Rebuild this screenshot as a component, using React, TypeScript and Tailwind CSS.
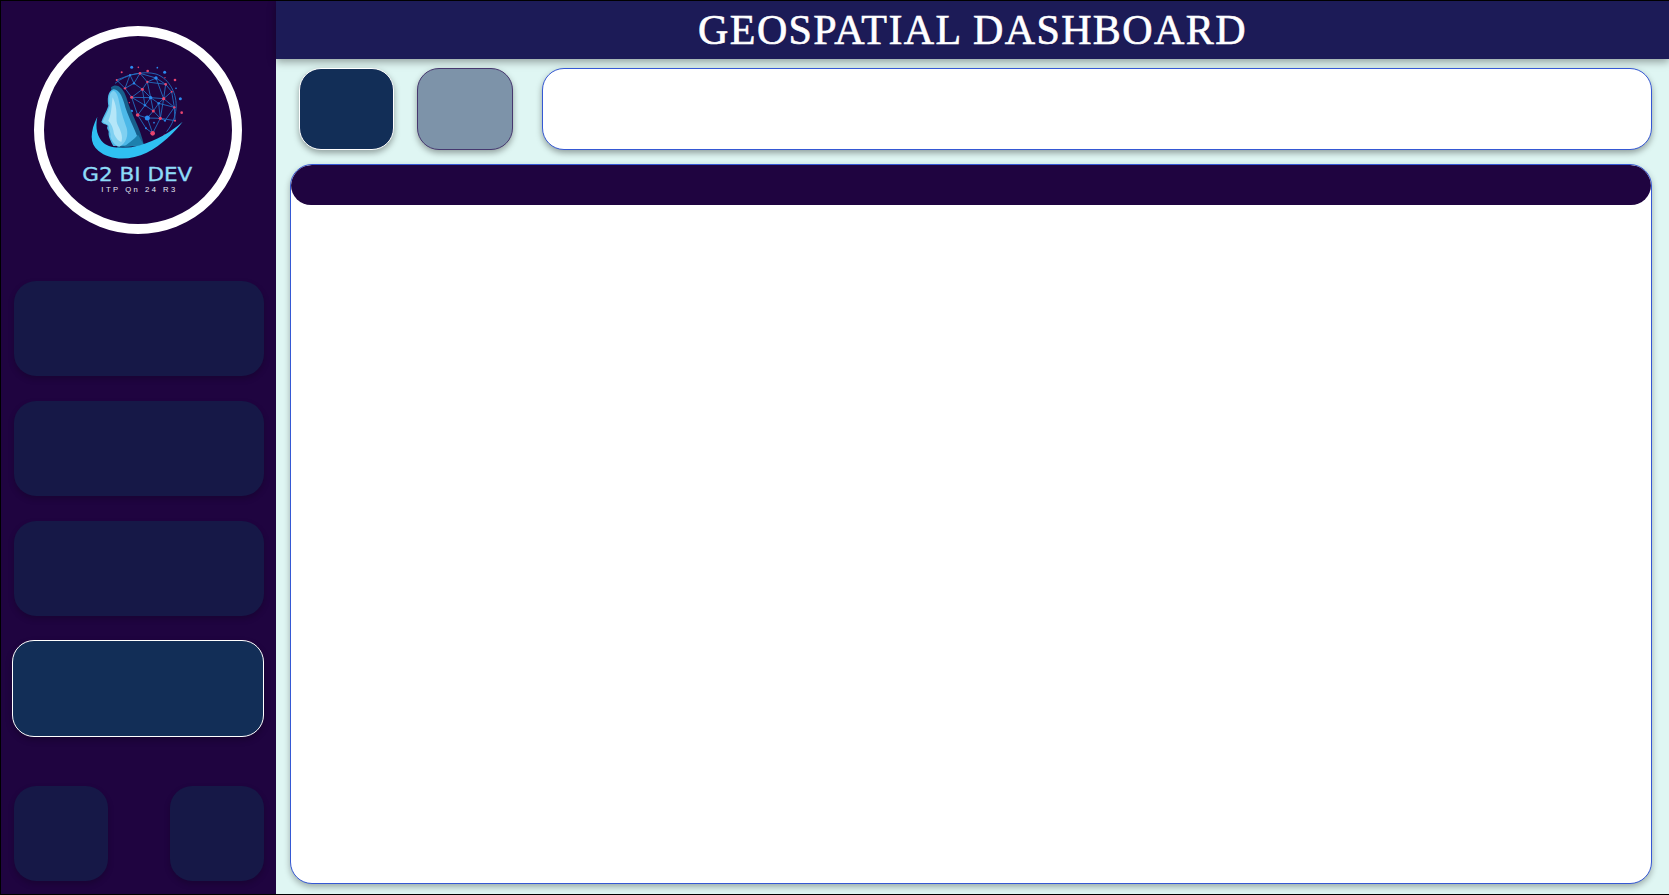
const nodes: [number, number, string, number][] = [
  [420, 220, "#e8456e", 4], [497, 253, "#e8456e", 4], [427, 268, "#e8456e", 4.5], [395, 292, "#e8456e", 4.5],
  [491, 296, "#e8456e", 5], [460, 333, "#e8456e", 4.5], [413, 345, "#e8456e", 5.5], [481, 355, "#e8456e", 5],
  [458, 400, "#e8456e", 7], [523, 322, "#e8456e", 3.5], [375, 265, "#e8456e", 3.5], [442, 246, "#e8456e", 3.5],
  [468, 234, "#2a8af0", 5], [452, 293, "#2a8af0", 5], [442, 354, "#2a8af0", 7.5], [402, 250, "#2a8af0", 3.5],
  [435, 316, "#2a8af0", 3.5], [476, 310, "#2a8af0", 3.5], [515, 275, "#e8456e", 3], [525, 362, "#e8456e", 3],
  [350, 240, "#e8456e", 3], [390, 225, "#2a8af0", 3], [495, 362, "#2a8af0", 3], [438, 385, "#2a8af0", 3],
];
const edges: [number, number][] = [
  [20, 21], [21, 0], [0, 12], [12, 1], [1, 18], [18, 9], [9, 19], [19, 7], [7, 8], [8, 23], [23, 6],
  [20, 10], [10, 15], [15, 0], [15, 2], [2, 11], [11, 0], [11, 12], [11, 1], [10, 3], [3, 2], [2, 13],
  [13, 11], [13, 4], [4, 1], [4, 18], [4, 9], [4, 17], [17, 13], [17, 5], [17, 7], [5, 13], [5, 16],
  [16, 13], [16, 3], [16, 6], [3, 6], [6, 14], [14, 5], [14, 7], [5, 7], [14, 8], [7, 22], [22, 9],
  [4, 7], [9, 17], [2, 16], [21, 15], [12, 4], [21, 10], [3, 13],
];
const dots: [number, number, string, number][] = [
  [395, 202, "#2a8af0", 4.5], [443, 213, "#e8456e", 4], [494, 217, "#2a8af0", 4.5], [525, 240, "#e8456e", 4],
  [541, 296, "#2a8af0", 4.5], [545, 338, "#e8456e", 4], [528, 265, "#2a8af0", 2.5], [472, 203, "#2a8af0", 2.5],
  [415, 202, "#e8456e", 2.5], [365, 217, "#e8456e", 3], [395, 333, "#2a8af0", 4], [462, 368, "#2a8af0", 2.5],
  [494, 407, "#e8456e", 3.5], [495, 233, "#e8456e", 2], [388, 308, "#e8456e", 2],
];

function Logo() {
  return (
    <svg viewBox="132 108 564 564" className="h-full w-full">
      <path d="M345 250 C380 222 430 212 468 222 C510 236 532 285 528 325 C526 350 518 372 500 395" fill="none" stroke="#2272c4" strokeWidth="2.6" />
      {edges.map(([a, b], i) => (
        <line key={i} x1={nodes[a][0]} y1={nodes[a][1]} x2={nodes[b][0]} y2={nodes[b][1]} stroke="#2272c4" strokeWidth="2.6" />
      ))}
      {dots.map(([x, y, c, r], i) => (
        <circle key={i} cx={x} cy={y} r={r} fill={c} />
      ))}
      {nodes.map(([x, y, c, r], i) => (
        <circle key={i} cx={x} cy={y} r={r} fill={c} />
      ))}
      <path d="M333 262 C350 248 370 262 380 295 C392 340 422 385 432 436 L352 445 Z" fill="#175f8c" />
      <path d="M340 268 C322 274 322 298 325 318 C318 338 308 352 304 366 C310 374 320 372 323 378 C318 386 326 390 326 396 C324 408 332 424 340 438 L420 436 C412 400 388 360 376 322 C370 296 358 266 340 268 Z" fill="#4cb8e8" />
      <path d="M340 272 C326 278 327 298 329 318 C323 338 312 354 308 365 C316 372 326 372 327 380 C327 392 334 400 331 410 C336 424 344 436 358 440 C378 430 386 408 380 384 C372 360 368 350 362 326 C356 300 354 276 340 272 Z" fill="#7fd0f1" />
      <path d="M338 292 C334 315 336 340 325 362 C335 372 340 384 342 402 C348 416 356 424 364 426 C370 410 362 392 352 372 C346 352 356 330 338 292 Z" fill="#b5e6f8" />
      <path d="M414 436 L432 434 C426 425 420 414 414 404 C400 420 384 430 372 440 Z" fill="#1d80ad" />
      <path d="M292 350 C270 395 268 430 295 452 C330 482 390 482 440 458 C485 436 525 395 548 365 C510 398 470 420 420 436 C380 448 330 446 310 428 C292 410 285 385 292 350 Z" fill="#2fc0f2" />
      <text x="247" y="544" fontFamily="'DejaVu Sans', sans-serif" fontSize="58" fill="#8edcf8" stroke="#8edcf8" strokeWidth="1" textLength="330" lengthAdjust="spacingAndGlyphs">G2 BI DEV</text>
      <text x="304" y="575" fontFamily="'Liberation Sans', sans-serif" fontSize="23" fill="#e3e9f4" textLength="222" lengthAdjust="spacing">ITP Qn 24 R3</text>
    </svg>
  );
}

function NavCard({ className = "" }: { className?: string }) {
  return <div className={`rounded-[22px] bg-[#161847] shadow-[0_3px_6px_rgba(0,0,0,0.2)] ${className}`} />;
}

export default function App() {
  return (
    <div className="flex h-[895px] w-[1669px] overflow-hidden border-t border-b border-l border-black bg-[#dff6f3]">
      <aside className="flex w-[275px] shrink-0 flex-col bg-[#1f0440] pl-[13px] pr-[12px]">
        <div className="mt-[25px] ml-[20px] h-[208px] w-[208px] rounded-full border-[10px] border-white">
          <Logo />
        </div>
        <NavCard className="mt-[47px] h-[95px] w-[250px]" />
        <NavCard className="mt-[25px] h-[95px] w-[250px]" />
        <NavCard className="mt-[25px] h-[95px] w-[250px]" />
        <div className="mt-[24px] -ml-[2px] h-[97px] w-[252px] rounded-[22px] border border-white bg-[#122e57] shadow-[0_3px_6px_rgba(0,0,0,0.25)]" />
        <div className="mt-[49px] flex w-[250px] justify-between">
          <NavCard className="h-[95px] w-[94px]" />
          <NavCard className="h-[95px] w-[94px]" />
        </div>
      </aside>
      <div className="flex min-w-0 flex-1 flex-col">
        <header className="flex h-[58px] shrink-0 items-center justify-center bg-[#1c1b57] shadow-[0_3px_8px_rgba(0,0,0,0.35)]">
          <h1 className="text-[42px] leading-none tracking-[1.4px] text-white [-webkit-text-stroke:0.6px_white] [font-family:'Liberation_Serif',serif]">GEOSPATIAL DASHBOARD</h1>
        </header>
        <div className="flex flex-1 flex-col pt-[9px] pr-[17px] pb-[10px] pl-[14px]">
          <div className="flex h-[82px] shrink-0 items-stretch">
            <div className="ml-[9px] w-[95px] rounded-[22px] border border-white bg-[#122e57] shadow-[0_3px_6px_rgba(0,0,0,0.35)]" />
            <div className="ml-[23px] w-[96px] rounded-[22px] border border-[#46386f] bg-[#7d93a9] shadow-[0_3px_6px_rgba(0,0,0,0.35)]" />
            <div className="ml-[29px] flex-1 rounded-[22px] border border-[#3558d4] bg-white shadow-[0_3px_6px_rgba(0,0,0,0.35)]" />
          </div>
          <main className="mt-[14px] flex-1 overflow-hidden rounded-[22px] border border-[#3558d4] bg-white shadow-[0_3px_6px_rgba(0,0,0,0.3)]">
            <div className="h-[40px] rounded-[20px] bg-[#1f0440]" />
          </main>
        </div>
      </div>
    </div>
  );
}
